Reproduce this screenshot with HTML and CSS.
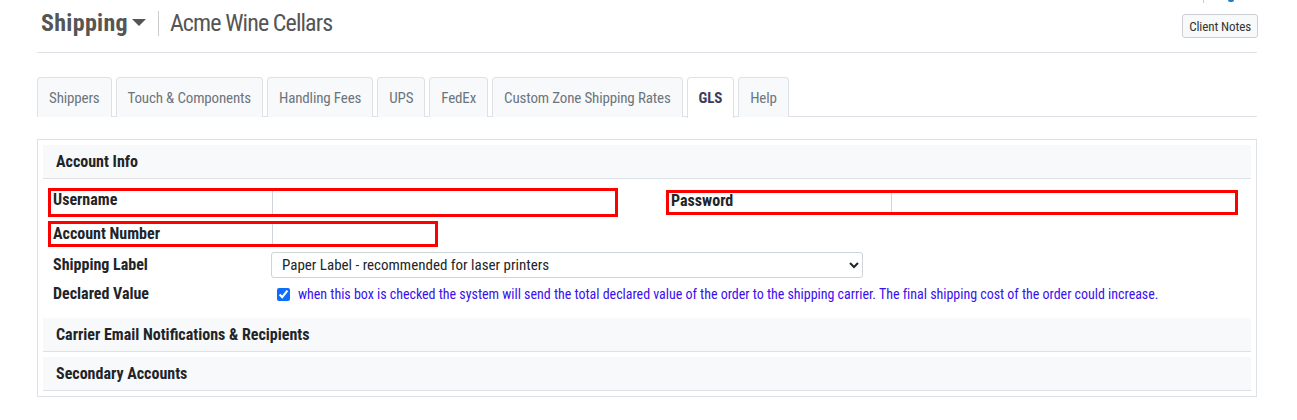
FILE: index.html
```html
<!DOCTYPE html>
<html>
<head>
<meta charset="utf-8">
<link rel="stylesheet" href="styles.css">
</head>
<body>
<div class="page">
  <div class="header">
    <div class="title">
      <span class="module">Shipping</span>
      <span class="caret"></span>
      <span class="divider"></span>
      <span class="client">Acme Wine Cellars</span>
    </div>
    <div class="right">
      <div class="topbits"><span class="tline"></span><span class="tdot"></span></div>
      <button class="notes">Client Notes</button>
    </div>
  </div>

  <div class="tabs">
    <div class="tab">Shippers</div>
    <div class="tab">Touch &amp; Components</div>
    <div class="tab">Handling Fees</div>
    <div class="tab">UPS</div>
    <div class="tab">FedEx</div>
    <div class="tab">Custom Zone Shipping Rates</div>
    <div class="tab active">GLS</div>
    <div class="tab">Help</div>
  </div>

  <div class="panel">
    <div class="section">Account Info</div>
    <div class="form">
      <div class="row two">
        <div class="field hl f-user">
          <label class="lbl">Username</label>
          <input class="inp" type="text">
        </div>
        <div class="field hl f-pass">
          <label class="lbl">Password</label>
          <input class="inp" type="password">
        </div>
      </div>
      <div class="row">
        <div class="field hl f-acct">
          <label class="lbl">Account Number</label>
          <input class="inp" type="text">
        </div>
      </div>
      <div class="row plain">
        <label class="lbl wide">Shipping Label</label>
        <select class="sel">
          <option>Paper Label - recommended for laser printers</option>
        </select>
      </div>
      <div class="row plain decl">
        <label class="lbl wide">Declared Value</label>
        <input class="chk" type="checkbox" checked>
        <span class="note">when this box is checked the system will send the total declared value of the order to the shipping carrier. The final shipping cost of the order could increase.</span>
      </div>
    </div>
    <div class="section">Carrier Email Notifications &amp; Recipients</div>
    <div class="section">Secondary Accounts</div>
  </div>
</div>
</body>
</html>
```

FILE: styles.css
```css
* { box-sizing: border-box; }
html, body { margin: 0; padding: 0; background: #fff; }
body {
  font-family: "Roboto Condensed", "Roboto", "Liberation Sans", sans-serif;
  color: #212529;
  width: 1297px;
  height: 420px;
  overflow: hidden;
}
.page { padding: 0 40px 0 37px; }

.header {
  height: 53px;
  border-bottom: 1px solid #dee2e6;
  display: flex;
  justify-content: space-between;
  align-items: flex-start;
}
.title {
  display: flex;
  align-items: center;
  height: 46px;
  padding-left: 4px;
  color: #555;
}
.module { font-size: 24px; font-weight: 700; color: #555; letter-spacing: 0.3px; }
.caret {
  width: 0; height: 0;
  border-left: 7px solid transparent;
  border-right: 7px solid transparent;
  border-top: 7px solid #555;
  margin-left: 4px;
  margin-top: -2px;
}
.divider {
  width: 1px; height: 25px;
  background: #ccc;
  margin: 0 13px 0 12px;
}
.client { font-size: 24px; color: #555; letter-spacing: -0.9px; margin-left: -2px; }

.right { position: relative; padding-top: 14px; }
.topbits { position: absolute; top: 0; left: 21px; height: 3px; width: 40px; }
.tline { position: absolute; left: 0; top: 0; width: 1px; height: 3px; background: #ccc; }
.tdot { position: absolute; left: 25px; top: -2px; width: 6px; height: 4px; border-radius: 3px; background: #1a7fcf; }
.notes {
  font-family: inherit;
  font-size: 13px;
  letter-spacing: -0.1px;
  color: #333;
  background: #f8f9fa;
  border: 1px solid #ccd0d5;
  border-radius: 3px;
  height: 24px;
  padding: 0 6px;
  margin-right: -1px;
}

.tabs {
  margin-top: 24px;
  display: flex;
  border-bottom: 1px solid #dee2e6;
  height: 40px;
}
.tab {
  height: 40px;
  padding: 0 11px;
  margin-right: 4px;
  display: flex;
  align-items: center;
  font-size: 15px;
  letter-spacing: -0.15px;
  color: #6c757d;
  background: #f8f9fa;
  border: 1px solid #dee2e6;
  border-bottom: none;
  border-radius: 4px 4px 0 0;
}
.tab.active {
  background: #fff;
  color: #3d3a5c;
  font-weight: 700;
  height: 41px;
  margin-bottom: -1px;
}

.panel {
  margin-top: 22px;
  border: 1px solid #dee2e6;
  padding: 5px 5px 5px 5px;
}
.section {
  background: #f8f9fa;
  border-bottom: 1px solid #dee2e6;
  height: 34px;
  padding-left: 13px;
  display: flex;
  align-items: center;
  font-size: 16px;
  font-weight: 700;
  color: #212529;
}
.section + .section { margin-top: 5px; }

.form { padding: 9px 5px 12px 5px; }
.row { display: flex; }
.row.two { gap: 48px; margin-bottom: 4px; }
.field { display: flex; align-items: stretch; }
.field.hl { border: 3px solid #f00; }
.f-user { width: 570px; height: 29px; }
.f-pass { width: 572px; height: 25px; margin-top: 2px; }
.f-acct { width: 390px; height: 26px; align-items: center; }
.f-acct .inp { align-self: stretch; }
.lbl {
  font-size: 16px;
  font-weight: 700;
  color: #212529;
  padding-left: 2px;
  width: 221px;
  flex: none;
  line-height: 18px;
}
.f-pass .lbl { width: 222px; margin-top: -1px; }
.inp {
  flex: 1;
  min-width: 0;
  border: none;
  border-left: 1px solid #ced4da;
  outline: none;
  background: #fff;
  margin: 0;
  padding: 0;
}
.row.plain { align-items: center; margin-top: 5px; height: 26px; }
.lbl.wide { padding-left: 5px; width: 223px; }
.sel {
  width: 592px;
  height: 26px;
  font-family: inherit;
  font-size: 15px;
  color: #212529;
  background: #fff;
  border: 1px solid #ced4da;
  border-radius: 3px;
  padding: 0 6px;
}
.row.plain.decl { height: 24px; margin-top: 4px; }
.chk {
  width: 13px; height: 13px;
  margin: 0 8px 0 6px;
  accent-color: #0d6efd;
}
.note { font-size: 14px; color: #3a10f0; letter-spacing: -0.02px; }
```
